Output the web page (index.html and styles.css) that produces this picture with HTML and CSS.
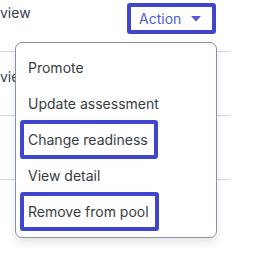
FILE: index.html
```html
<!DOCTYPE html>
<html lang="en">
<head>
  <meta charset="UTF-8">
  <meta name="viewport" content="width=device-width, initial-scale=1.0">
  <title>Candidate actions</title>
  <link rel="stylesheet" href="styles.css">
</head>
<body>
  <div class="table">
    <div class="row">
      <span class="cell">view</span>
      <div class="actions">
        <button class="action-btn">
          Action
          <svg width="10" height="6" viewBox="0 0 10 6"><path d="M0 0h10L5 5.5z" fill="currentColor"/></svg>
        </button>
        <ul class="menu">
          <li class="menu-item">Promote</li>
          <li class="menu-item">Update assessment</li>
          <li class="menu-item"><span class="marked">Change readiness</span></li>
          <li class="menu-item">View detail</li>
          <li class="menu-item"><span class="marked">Remove from pool</span></li>
        </ul>
      </div>
    </div>
    <div class="row">
      <span class="cell">view</span>
    </div>
    <div class="row"></div>
  </div>
</body>
</html>
```

FILE: styles.css
```css
html, body {
  height: 100%;
}
body {
  margin: 0;
  min-height: 264px;
  background: #fff;
  font-family: Inter, "Noto Sans", sans-serif;
  font-size: 14px;
  color: #344054;
}
.table {
  width: 230px;
  margin-top: -12px;
}
.row {
  display: flex;
  align-items: flex-start;
  height: 64px;
  box-sizing: border-box;
  padding-top: 16px;
  border-bottom: 1px solid #d5d9e2;
}
.cell {
  line-height: 18px;
}
.actions {
  position: relative;
  margin-left: auto;
  margin-right: 14px;
  margin-top: -1px;
}
.action-btn {
  display: flex;
  align-items: center;
  justify-content: space-between;
  width: 89px;
  height: 31px;
  box-sizing: border-box;
  margin: 0;
  padding: 0 11px 0 8px;
  background: #fff;
  border: 4px solid #3f46cd;
  border-radius: 3px;
  color: #535cd6;
  font-family: inherit;
  font-size: 14px;
}
.menu {
  position: absolute;
  top: 39px;
  right: -1px;
  width: 202px;
  box-sizing: border-box;
  margin: 0;
  padding: 7px 0;
  list-style: none;
  background: #fff;
  border: 1px solid #8a92a2;
  border-radius: 7px;
  box-shadow: 0 4px 9px rgba(16, 24, 40, 0.12);
  z-index: 2;
}
.menu-item {
  height: 36px;
  line-height: 36px;
  padding-left: 12px;
  color: #383c44;
}
.marked {
  position: relative;
  display: inline-block;
}
.marked::after {
  content: "";
  position: absolute;
  left: -8px;
  right: -10px;
  top: -2px;
  bottom: -1px;
  border: 4px solid #3f46cd;
  border-radius: 3px;
}
```
